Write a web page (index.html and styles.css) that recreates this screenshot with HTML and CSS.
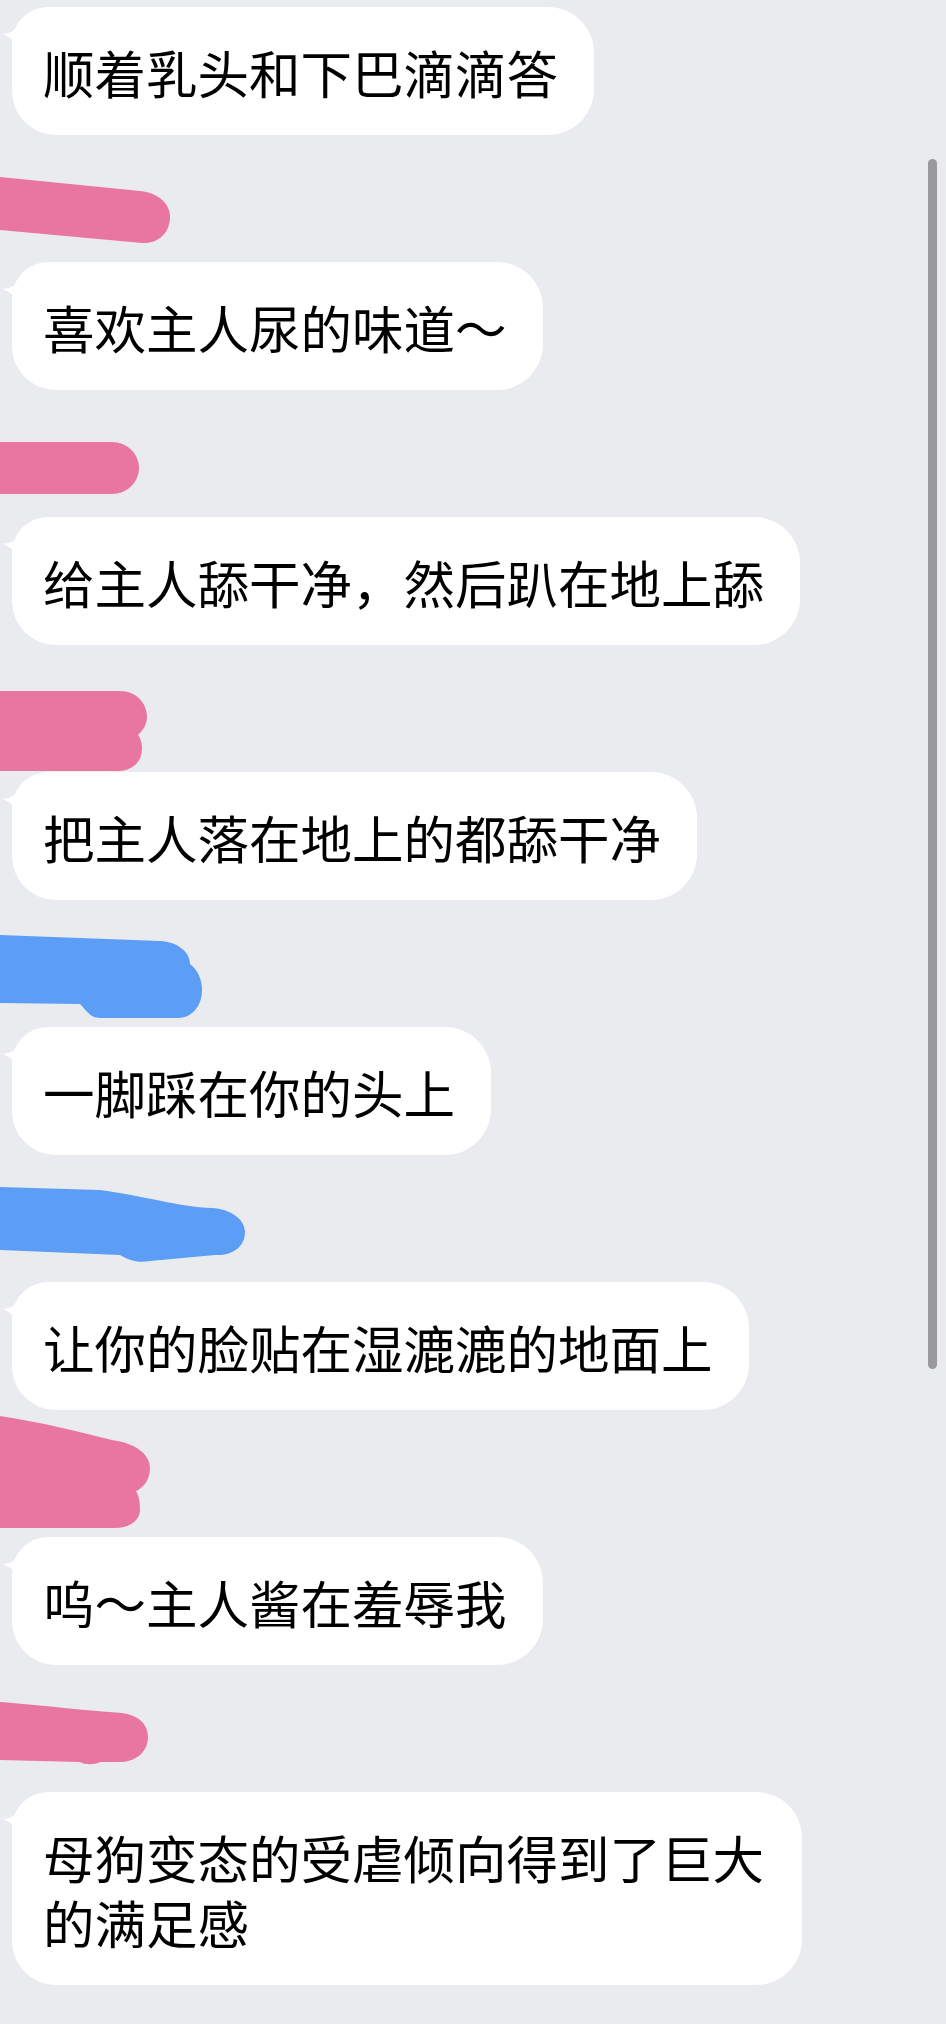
FILE: index.html
```html
<!DOCTYPE html>
<html lang="zh-CN">
<head>
<meta charset="utf-8">
<title>chat</title>
<link rel="stylesheet" href="styles.css">
</head>
<body>
<div class="chat">
  <div class="bubble"><svg class="tail" width="24" height="30" viewBox="0 0 24 30"><path d="M0,12 C6,14 12,12 18,6 L24,6 L24,30 L20,30 C18,22 10,15 0,12 Z"/></svg>顺着乳头和下巴滴滴答</div>
  <div class="gap"><svg width="260" height="127" viewBox="0 0 260 127"><path class="pink" d="M0,42 L140,56 C160,58 170,70 170,82 C170,98 158,109 142,108 L0,95 Z"/></svg></div>
  <div class="bubble"><svg class="tail" width="24" height="30" viewBox="0 0 24 30"><path d="M0,12 C6,14 12,12 18,6 L24,6 L24,30 L20,30 C18,22 10,15 0,12 Z"/></svg>喜欢主人尿的味道～</div>
  <div class="gap"><svg width="260" height="127" viewBox="0 0 260 127"><path class="pink" d="M0,52 L112,52 C127,52 139,64 139,78 C139,92 127,104 112,104 L0,104 Z"/></svg></div>
  <div class="bubble"><svg class="tail" width="24" height="30" viewBox="0 0 24 30"><path d="M0,12 C6,14 12,12 18,6 L24,6 L24,30 L20,30 C18,22 10,15 0,12 Z"/></svg>给主人舔干净，然后趴在地上舔</div>
  <div class="gap"><svg width="260" height="127" viewBox="0 0 260 127"><path class="pink" d="M0,46 L120,46 C136,46 147,58 147,72 C147,82 140,88 138,90 C141,94 142,98 142,104 C142,117 132,126 118,126 L0,126 Z"/></svg></div>
  <div class="bubble"><svg class="tail" width="24" height="30" viewBox="0 0 24 30"><path d="M0,12 C6,14 12,12 18,6 L24,6 L24,30 L20,30 C18,22 10,15 0,12 Z"/></svg>把主人落在地上的都舔干净</div>
  <div class="gap"><svg width="260" height="127" viewBox="0 0 260 127"><path class="blue" d="M0,35 L160,41 C178,42 190,52 190,64 C198,70 202,80 202,90 C202,106 192,118 178,118 L100,118 C90,118 86,110 80,104 L0,103 Z"/></svg></div>
  <div class="bubble"><svg class="tail" width="24" height="30" viewBox="0 0 24 30"><path d="M0,12 C6,14 12,12 18,6 L24,6 L24,30 L20,30 C18,22 10,15 0,12 Z"/></svg>一脚踩在你的头上</div>
  <div class="gap"><svg width="260" height="127" viewBox="0 0 260 127"><path class="blue" d="M0,32 L100,35 C140,40 180,52 212,53 C230,54 245,64 245,77 C245,92 232,101 215,100 L150,106 C138,108 130,106 120,100 L0,95 Z"/></svg></div>
  <div class="bubble"><svg class="tail" width="24" height="30" viewBox="0 0 24 30"><path d="M0,12 C6,14 12,12 18,6 L24,6 L24,30 L20,30 C18,22 10,15 0,12 Z"/></svg>让你的脸贴在湿漉漉的地面上</div>
  <div class="gap"><svg width="260" height="127" viewBox="0 0 260 127"><path class="pink" d="M0,6 C40,12 80,22 112,30 C135,33 150,44 150,58 C150,70 143,78 136,81 C139,86 140,92 140,100 C140,110 130,118 115,118 L0,118 Z"/></svg></div>
  <div class="bubble"><svg class="tail" width="24" height="30" viewBox="0 0 24 30"><path d="M0,12 C6,14 12,12 18,6 L24,6 L24,30 L20,30 C18,22 10,15 0,12 Z"/></svg>呜～主人酱在羞辱我</div>
  <div class="gap"><svg width="260" height="127" viewBox="0 0 260 127"><path class="pink" d="M0,37 C40,40 90,46 122,48 C137,50 148,58 148,72 C148,86 137,96 122,97 L100,97 C95,100 85,100 80,97 L0,95 Z"/></svg></div>
  <div class="bubble"><svg class="tail" width="24" height="30" viewBox="0 0 24 30"><path d="M0,12 C6,14 12,12 18,6 L24,6 L24,30 L20,30 C18,22 10,15 0,12 Z"/></svg>母狗变态的受虐倾向得到了巨大的满足感</div>
</div>
<div class="scrollbar"></div>
</body>
</html>
```
FILE: styles.css
```css
html, body {
  margin: 0;
  padding: 0;
  background: #eaebef;
}
body {
  width: 946px;
  height: 2024px;
  overflow: hidden;
  position: relative;
  font-family: "Noto Sans CJK SC", "Noto Sans", sans-serif;
}
.chat {
  display: flex;
  flex-direction: column;
  align-items: flex-start;
  padding-top: 7px;
}
.bubble {
  position: relative;
  box-sizing: border-box;
  max-width: 790px;
  margin-left: 12px;
  padding: 32px 36px 31px 31px;
  background: #ffffff;
  border-radius: 36px 46px 46px 44px;
  font-size: 51.5px;
  line-height: 65px;
  color: #000000;
  white-space: normal;
}
.tail {
  position: absolute;
  left: -12px;
  top: 14px;
  fill: #ffffff;
}
.gap {
  height: 127px;
  width: 260px;
}
.gap svg {
  display: block;
}
.pink { fill: #e8769f; }
.blue { fill: #5c9ef5; }
.scrollbar {
  position: absolute;
  left: 928px;
  top: 159px;
  width: 9px;
  height: 1210px;
  border-radius: 5px;
  background: #9a9a9d;
}
```
